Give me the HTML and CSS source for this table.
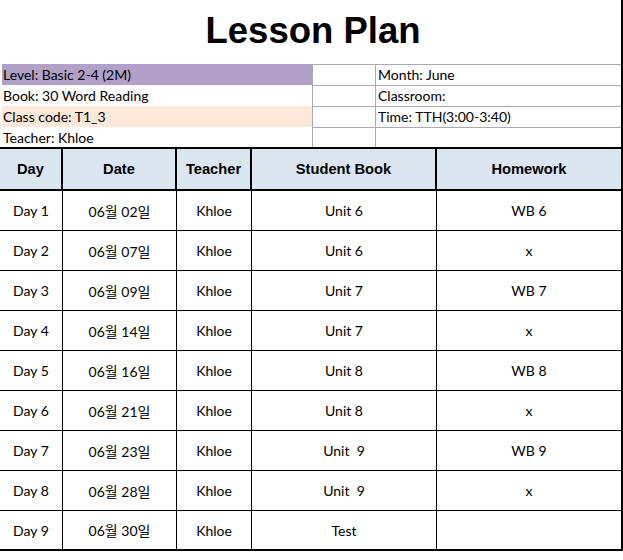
FILE: index.html
```html
<!DOCTYPE html>
<html lang="ko">
<head>
<meta charset="utf-8">
<title>Lesson Plan</title>
<link rel="stylesheet" href="styles.css">
</head>
<body>
<div class="sheet">
  <div class="title">Lesson Plan</div>
  <div class="info">
    <div class="info-row">
      <div class="c1 purple">Level: Basic 2-4 (2M)</div>
      <div class="c2"></div>
      <div class="c3">Month: June</div>
    </div>
    <div class="info-row">
      <div class="c1">Book: 30 Word Reading</div>
      <div class="c2"></div>
      <div class="c3">Classroom:</div>
    </div>
    <div class="info-row">
      <div class="c1 peach">Class code: T1_3</div>
      <div class="c2"></div>
      <div class="c3">Time: TTH(3:00-3:40)</div>
    </div>
    <div class="info-row last">
      <div class="c1">Teacher: Khloe</div>
      <div class="c2"></div>
      <div class="c3"></div>
    </div>
  </div>
  <div class="plan">
    <div class="row head">
      <div class="cell day">Day</div>
      <div class="cell date">Date</div>
      <div class="cell teacher">Teacher</div>
      <div class="cell book">Student Book</div>
      <div class="cell hw">Homework</div>
    </div>
    <div class="row">
      <div class="cell day">Day 1</div>
      <div class="cell date">06월 02일</div>
      <div class="cell teacher">Khloe</div>
      <div class="cell book">Unit 6</div>
      <div class="cell hw">WB 6</div>
    </div>
    <div class="row">
      <div class="cell day">Day 2</div>
      <div class="cell date">06월 07일</div>
      <div class="cell teacher">Khloe</div>
      <div class="cell book">Unit 6</div>
      <div class="cell hw">x</div>
    </div>
    <div class="row">
      <div class="cell day">Day 3</div>
      <div class="cell date">06월 09일</div>
      <div class="cell teacher">Khloe</div>
      <div class="cell book">Unit 7</div>
      <div class="cell hw">WB 7</div>
    </div>
    <div class="row">
      <div class="cell day">Day 4</div>
      <div class="cell date">06월 14일</div>
      <div class="cell teacher">Khloe</div>
      <div class="cell book">Unit 7</div>
      <div class="cell hw">x</div>
    </div>
    <div class="row">
      <div class="cell day">Day 5</div>
      <div class="cell date">06월 16일</div>
      <div class="cell teacher">Khloe</div>
      <div class="cell book">Unit 8</div>
      <div class="cell hw">WB 8</div>
    </div>
    <div class="row">
      <div class="cell day">Day 6</div>
      <div class="cell date">06월 21일</div>
      <div class="cell teacher">Khloe</div>
      <div class="cell book">Unit 8</div>
      <div class="cell hw">x</div>
    </div>
    <div class="row">
      <div class="cell day">Day 7</div>
      <div class="cell date">06월 23일</div>
      <div class="cell teacher">Khloe</div>
      <div class="cell book">Unit  9</div>
      <div class="cell hw">WB 9</div>
    </div>
    <div class="row">
      <div class="cell day">Day 8</div>
      <div class="cell date">06월 28일</div>
      <div class="cell teacher">Khloe</div>
      <div class="cell book">Unit  9</div>
      <div class="cell hw">x</div>
    </div>
    <div class="row last">
      <div class="cell day">Day 9</div>
      <div class="cell date">06월 30일</div>
      <div class="cell teacher">Khloe</div>
      <div class="cell book">Test</div>
      <div class="cell hw"></div>
    </div>
  </div>
</div>
</body>
</html>
```
FILE: styles.css
```css
* { box-sizing: border-box; }

html, body {
  margin: 0;
  padding: 0;
  background: #ffffff;
}

body {
  font-family: Lato, "Noto Sans CJK KR", sans-serif;
  font-size: 14px;
  color: #000000;
}

.sheet {
  width: 623px;
  border-right: 2px solid #000000;
}

.title {
  height: 64px;
  padding: 10px 0 0 5px;
  text-align: center;
  font-family: "Liberation Sans", Arial, sans-serif;
  font-weight: bold;
  font-size: 36.5px;
  line-height: 42px;
}

.info-row {
  display: flex;
  height: 21px;
  line-height: 21px;
}

.info-row.last {
  height: 20px;
}

.c1 {
  width: 310px;
  margin-left: 2px;
  padding-left: 1px;
  white-space: nowrap;
}

.c2 {
  width: 63px;
  border-left: 1px solid #ababab;
  border-top: 1px solid #ababab;
}

.c3 {
  flex: 1;
  padding-left: 2px;
  border-left: 1px solid #ababab;
  border-top: 1px solid #ababab;
  line-height: 20px;
  white-space: nowrap;
}

.c1.purple { background: #b1a0c7; }
.c1.peach { background: #fde9d9; }

.plan {
  display: flex;
  flex-direction: column;
}

.row {
  display: flex;
  height: 40px;
  border-bottom: 1px solid #000000;
}

.row.last {
  border-bottom: 2px solid #000000;
}

.row.head {
  height: 44px;
  border-top: 2px solid #000000;
  border-bottom: 2px solid #000000;
  background: #dce6f1;
  font-family: "Liberation Sans", Arial, sans-serif;
  font-weight: bold;
  font-size: 14.7px;
}

.cell {
  display: flex;
  align-items: center;
  justify-content: center;
  border-right: 1px solid #000000;
  white-space: pre;
}

.row.head .cell {
  border-right-width: 2px;
}

.cell.day { width: 63px; }
.cell.date { width: 114px; }
.cell.teacher { width: 75px; }
.cell.book { width: 185px; }
.cell.hw { width: 184px; border-right: none; }
.row.head .cell.hw { border-right: none; }
```
